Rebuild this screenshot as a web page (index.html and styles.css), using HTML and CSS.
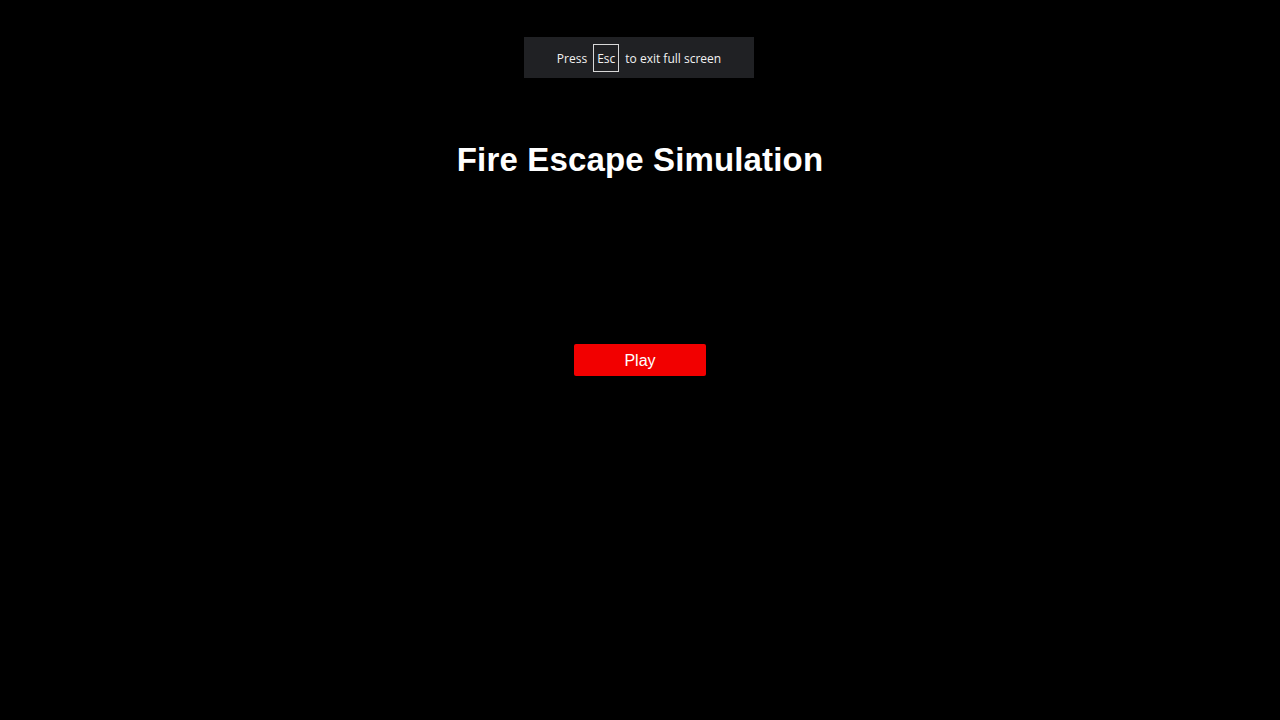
FILE: index.html
```html
<!DOCTYPE html>
<html lang="en">
<head>
<meta charset="utf-8">
<title>Fire Escape Simulation</title>
<link rel="stylesheet" href="styles.css">
</head>
<body>
  <main class="menu">
    <h1 class="title">Fire Escape Simulation</h1>
    <button class="play-btn" type="button">Play</button>
  </main>
  <div class="fs-notice">Press <span class="key">Esc</span> to exit full screen</div>
</body>
</html>
```
FILE: styles.css
```css
html, body {
  margin: 0;
  padding: 0;
  height: 100%;
  background: #000;
}

body {
  font-family: "Liberation Sans", Arial, sans-serif;
  color: #fff;
}

.menu {
  display: flex;
  flex-direction: column;
  align-items: center;
  padding-top: 140px;
}

.title {
  margin: 0;
  font-size: 33px;
  font-weight: bold;
  line-height: 40px;
  letter-spacing: 0.15px;
}

.play-btn {
  margin-top: 164px;
  width: 132px;
  height: 32px;
  border: none;
  border-radius: 2px;
  background: #f20000;
  color: #fff;
  font-family: "Liberation Sans", Arial, sans-serif;
  font-size: 16px;
  padding: 2px 0 0;
  cursor: pointer;
}

.fs-notice {
  position: absolute;
  top: 37px;
  left: 524px;
  width: 230px;
  height: 41px;
  box-sizing: border-box;
  padding-top: 1px;
  background: #202124;
  color: #f2f2f2;
  font-family: "Open Sans", "Noto Sans", sans-serif;
  font-size: 12px;
  display: flex;
  align-items: center;
  justify-content: center;
  gap: 6px;
}

.key {
  display: inline-flex;
  align-items: center;
  justify-content: center;
  height: 28px;
  padding: 0 3px;
  border: 1px solid #d8d8d8;
  box-sizing: border-box;
}
```
